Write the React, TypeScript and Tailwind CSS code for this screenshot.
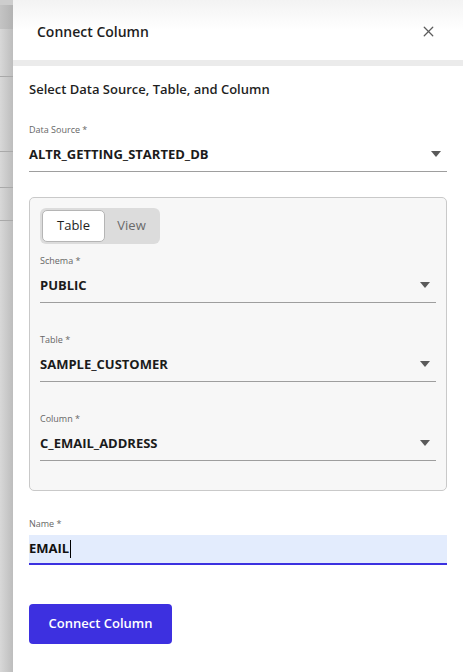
import { X } from "lucide-react";

const font = { fontFamily: '"Open Sans", "Noto Sans", sans-serif' };

const Caret = () => (
  <svg width="10" height="6" viewBox="0 0 10 6" className="mr-[6px]">
    <path d="M0 0H10L5 6Z" fill="#5a5a5a" />
  </svg>
);

const SelectField = ({ label, value }: { label: string; value: string }) => (
  <div>
    <div className="text-[9px] leading-[12px] text-[#666]">{label}</div>
    <div className="h-[36px] flex items-center justify-between border-b border-[#9e9e9e]">
      <span className="text-[13px] font-bold text-[#1b1b1b] pt-[2px]">{value}</span>
      <Caret />
    </div>
  </div>
);

export default function App() {
  return (
    <div className="flex h-[672px] w-[463px] overflow-hidden bg-white" style={font}>
      {/* dimmed page behind the drawer */}
      <div className="w-[13px] shrink-0 flex flex-col bg-gradient-to-r from-[#d8d8d8] to-[#bdbdbd]">
        <div className="h-[5px] bg-[#cdcdcd]" />
        <div className="h-[24px] bg-gradient-to-r from-[#c4c4c4] to-[#b3b3b3]" />
        <div className="h-[48px] border-b border-[#a9a9a9]" />
        <div className="h-[75px] border-b border-[#a9a9a9]" />
        <div className="h-[36px] border-b border-[#a9a9a9]" />
        <div className="h-[33px] border-b border-[#a9a9a9]" />
      </div>

      {/* drawer */}
      <div className="flex-1 flex flex-col">
        <div className="h-[60px] flex items-center justify-between pl-[24px] pr-[26px] bg-gradient-to-b from-[#f3f3f3] via-white to-white">
          <h2 className="text-[14px] font-semibold text-[#1f1f1f] pt-[2px]">Connect Column</h2>
          <X className="w-[17px] h-[17px] text-[#5c5c5c] mt-[2px]" strokeWidth={1.8} />
        </div>
        <div className="h-[6px] bg-[#ebebeb]" />

        <div className="px-[16px] pt-[14px]">
          <h3 className="text-[13px] font-semibold leading-[18px] text-[#1f1f1f]">
            Select Data Source, Table, and Column
          </h3>

          <div className="mt-[26px]">
            <SelectField label="Data Source *" value="ALTR_GETTING_STARTED_DB" />
          </div>

          <div className="mt-[25px] h-[294px] rounded-[5px] border border-[#c9c9c9] bg-[#f7f7f7] px-[10px] pt-[10px]">
            <div className="inline-flex h-[36px] w-[120px] rounded-[6px] bg-[#dcdcdc] p-[2px]">
              <div className="w-[63px] rounded-[5px] border border-[#b5b5b5] bg-white flex items-center justify-center text-[13px] text-[#1f1f1f]">
                Table
              </div>
              <div className="flex-1 flex items-center justify-center text-[13px] text-[#6a6a6a]">
                View
              </div>
            </div>
            <div className="mt-[11px] flex flex-col gap-[31px]">
              <SelectField label="Schema *" value="PUBLIC" />
              <SelectField label="Table *" value="SAMPLE_CUSTOMER" />
              <SelectField label="Column *" value="C_EMAIL_ADDRESS" />
            </div>
          </div>

          <div className="mt-[27px]">
            <div className="text-[9px] leading-[12px] text-[#666]">Name *</div>
            <div className="mt-[5px] h-[30px] bg-[#e3ecfd] border-b-2 border-[#3b31e0] flex items-center">
              <span className="text-[13px] font-bold text-[#111]">EMAIL</span>
              <span className="ml-[1px] h-[18px] w-px bg-black" />
            </div>
          </div>

          <button className="mt-[39px] h-[40px] w-[143px] rounded-[4px] bg-[#3d30e0] text-white text-[13px] font-semibold">
            Connect Column
          </button>
        </div>
      </div>
    </div>
  );
}
